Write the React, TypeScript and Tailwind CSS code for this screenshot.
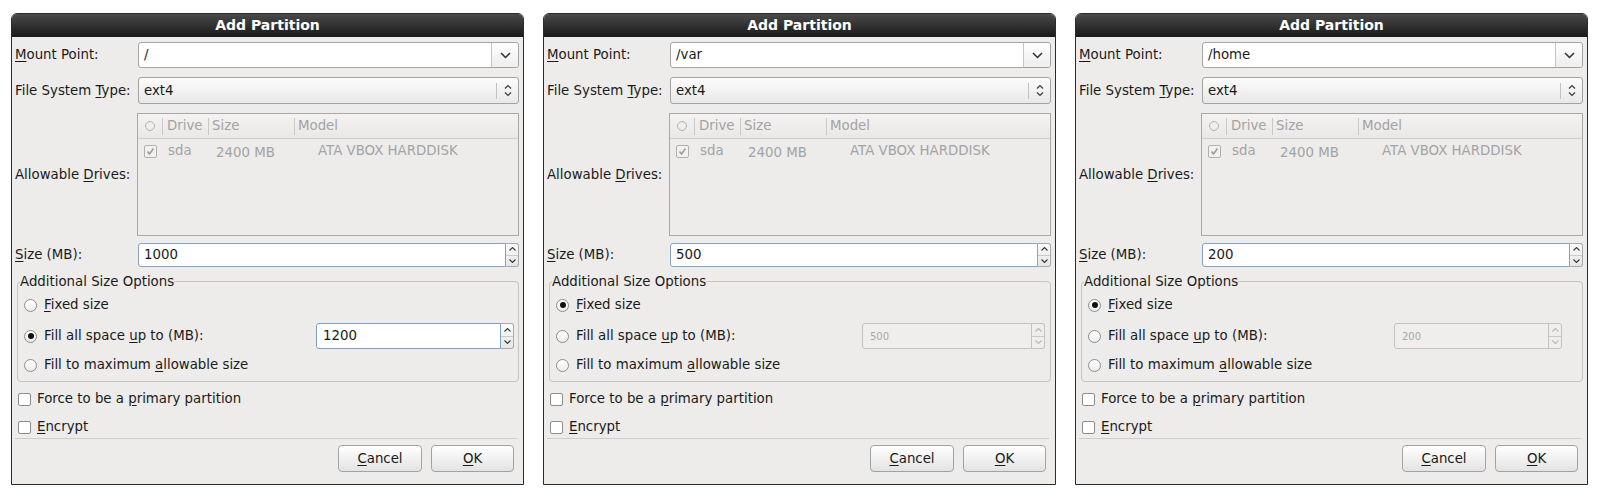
import React from 'react';

type DialogProps = {
	mount: string;
	size: string;
	fixed: boolean;
	spinValue: string;
	spinClass: string;
};

// small drawings used by the GTK widgets
function ChevronDown() {
	return (
		<svg width="11" height="7" viewBox="0 0 11 7">
			<polyline points="1,1 5.5,5.5 10,1" fill="none" stroke="#2e2e2e" strokeWidth="1.5" />
		</svg>
	);
}

function UpDown() {
	return (
		<svg width="8" height="13" viewBox="0 0 8 13">
			<polyline points="1,4.5 4,1.5 7,4.5" fill="none" stroke="#3a3a3a" strokeWidth="1.2" />
			<polyline points="1,8.5 4,11.5 7,8.5" fill="none" stroke="#3a3a3a" strokeWidth="1.2" />
		</svg>
	);
}

function SpinButtons({ disabled = false }: { disabled?: boolean }) {
	const c = disabled ? '#b9b9b9' : '#3a3a3a';
	return (
		<div
			className={`w-[13px] flex flex-col border border-l-0 rounded-r-[3px] ${
				disabled ? 'border-[#c4c2bf] bg-[#efeeed]' : 'border-[#a9a9a9] bg-gradient-to-b from-[#fbfbfb] to-[#e6e6e6]'
			}`}
		>
			<div className="flex-1 flex items-center justify-center border-b border-[#c9c9c9]">
				<svg width="7" height="4" viewBox="0 0 7 4">
					<polyline points="0.5,3.5 3.5,0.5 6.5,3.5" fill="none" stroke={c} strokeWidth="1.1" />
				</svg>
			</div>
			<div className="flex-1 flex items-center justify-center">
				<svg width="7" height="4" viewBox="0 0 7 4">
					<polyline points="0.5,0.5 3.5,3.5 6.5,0.5" fill="none" stroke={c} strokeWidth="1.1" />
				</svg>
			</div>
		</div>
	);
}

function Radio({ checked }: { checked: boolean }) {
	return (
		<div className="w-[13px] h-[13px] rounded-full border border-[#8d8d8d] bg-gradient-to-b from-white to-[#ececec] flex items-center justify-center shrink-0">
			{checked && <div className="w-[6px] h-[6px] rounded-full bg-[#111]" />}
		</div>
	);
}

function Check({ checked = false, disabled = false }: { checked?: boolean; disabled?: boolean }) {
	return (
		<div
			className={`w-[13px] h-[13px] rounded-[2px] border flex items-center justify-center shrink-0 ${
				disabled ? 'border-[#b0b0b0] bg-[#f2f1f0]' : 'border-[#8d8d8d] bg-white'
			}`}
		>
			{checked && (
				<svg width="9" height="9" viewBox="0 0 9 9">
					<polyline points="1.5,4.5 3.5,7 7.5,1.5" fill="none" stroke="#9a9a9a" strokeWidth="1.5" />
				</svg>
			)}
		</div>
	);
}

function Button({ children }: { children: React.ReactNode }) {
	return (
		<div className="h-[27px] flex items-center justify-center rounded-[4px] border border-[#a2a2a2] bg-gradient-to-b from-white to-[#e3e3e3] shadow-[inset_0_1px_0_#fff]">
			{children}
		</div>
	);
}

function AddPartitionDialog({ mount, size, fixed, spinValue, spinClass }: DialogProps) {
	return (
		<div className="w-[513px] border border-[#2b2b2b] rounded-t-[6px] bg-[#edeceb] flex flex-col text-[13.33px] text-[#1a1a1a]">
			{/* Title bar */}
			<div className="h-[23px] rounded-t-[5px] bg-gradient-to-b from-[#4a4a4a] to-[#1a1a1a] flex items-center justify-center text-white font-bold text-[14px]">
				Add Partition
			</div>

			<div className="pl-[3px] pr-[4px] pb-[12px] flex flex-col">
				{/* Mount point */}
				<div className="mt-[5px] flex items-center">
					<div className="w-[123px]">
						<u className="underline-offset-2">M</u>ount Point:
					</div>
					<div className="flex-1 h-[26px] flex rounded-[3px] border border-[#a3a3a3] bg-white">
						<div className="flex-1 flex items-center px-[5px]">{mount}</div>
						<div className="w-[27px] flex items-center justify-center border-l border-[#c6c6c6] rounded-r-[3px] bg-gradient-to-b from-white to-[#ededed]">
							<ChevronDown />
						</div>
					</div>
				</div>

				{/* File system type */}
				<div className="mt-[9px] flex items-center">
					<div className="w-[123px]">
						File System <u className="underline-offset-2">T</u>ype:
					</div>
					<div className="flex-1 h-[27px] flex items-center rounded-[3px] border border-[#a3a3a3] bg-gradient-to-b from-[#fcfcfc] to-[#e8e8e8]">
						<div className="flex-1 px-[5px]">ext4</div>
						<div className="h-[16px] border-l border-[#c2c2c2]" />
						<div className="w-[21px] flex items-center justify-center">
							<UpDown />
						</div>
					</div>
				</div>

				{/* Allowable drives */}
				<div className="mt-[9px] flex items-center">
					<div className="w-[122px]">
						Allowable <u className="underline-offset-2">D</u>rives:
					</div>
					<div className="flex-1 h-[123px] border border-[#aaa9a8] bg-[#edeceb] flex flex-col text-[#a3a3a3]">
						<div className="h-[25px] flex items-center border-b border-[#cfcdcb] bg-gradient-to-b from-[#f4f3f2] to-[#e9e8e7]">
							<div className="w-[24px] flex items-center justify-center">
								<div className="w-[10px] h-[10px] rounded-full border border-[#b3b3b3]" />
							</div>
							<div className="h-[17px] border-l border-[#c9c9c9]" />
							<div className="w-[45px] pl-[4px]">Drive</div>
							<div className="h-[17px] border-l border-[#c9c9c9]" />
							<div className="w-[85px] pl-[3px]">Size</div>
							<div className="h-[17px] border-l border-[#c9c9c9]" />
							<div className="pl-[3px]">Model</div>
						</div>
						<div className="h-[24px] flex items-center">
							<div className="w-[6px]" />
							<Check checked disabled />
							<div className="w-[59px] pl-[11px]">sda</div>
							<div className="w-[102px] pt-[3px]">2400 MB</div>
							<div>ATA VBOX HARDDISK</div>
						</div>
					</div>
				</div>

				{/* Size */}
				<div className="mt-[7px] flex items-center">
					<div className="w-[123px]">
						<u className="underline-offset-2">S</u>ize (MB):
					</div>
					<div className="flex-1 h-[24px] flex">
						<div className="flex-1 flex items-center px-[5px] bg-white border border-[#86a3c9] rounded-l-[3px]">{size}</div>
						<SpinButtons />
					</div>
				</div>

				{/* Additional size options */}
				<fieldset className="mt-[6px] ml-[2px] border border-[#c6c3c0] rounded-[4px] px-0 pt-0 pb-[3px] min-w-0">
					<legend className="ml-[2px] px-0 leading-[17px]">Additional Size Options</legend>
					<div className="pl-[6px] flex flex-col">
						<div className="mt-[2px] h-[26px] flex items-center gap-[7px]">
							<Radio checked={fixed} />
							<span>
								<u className="underline-offset-2">F</u>ixed size
							</span>
						</div>
						<div className="mt-[5px] h-[26px] flex items-center gap-[7px]">
							<Radio checked={!fixed} />
							<span className="flex-1">
								Fill all space <u className="underline-offset-2">u</u>p to (MB):
							</span>
							{fixed ? (
								<div className={`h-[26px] flex ${spinClass}`}>
									<div className="flex-1 flex items-center px-[7px] text-[10px] text-[#a9a9a9] bg-[#efeeed] border border-[#c4c2bf] rounded-l-[3px]">
										{spinValue}
									</div>
									<SpinButtons disabled />
								</div>
							) : (
								<div className={`h-[26px] flex ${spinClass}`}>
									<div className="flex-1 flex items-center px-[6px] bg-white border border-[#7f9fcb] rounded-l-[3px]">
										{spinValue}
									</div>
									<SpinButtons />
								</div>
							)}
						</div>
						<div className="mt-[3px] h-[26px] flex items-center gap-[7px]">
							<Radio checked={false} />
							<span>
								Fill to maximum <u className="underline-offset-2">a</u>llowable size
							</span>
						</div>
					</div>
				</fieldset>

				{/* Checkboxes */}
				<div className="mt-[7px] h-[20px] pl-[3px] flex items-center gap-[6px]">
					<Check />
					<span>
						Force to be a <u className="underline-offset-2">p</u>rimary partition
					</span>
				</div>
				<div className="mt-[8px] h-[20px] pl-[3px] flex items-center gap-[6px]">
					<Check />
					<span>
						<u className="underline-offset-2">E</u>ncrypt
					</span>
				</div>

				<div className="mt-[1px] mr-[2px] border-t border-[#cfccc9]" />

				{/* Buttons */}
				<div className="mt-[6px] mr-[5px] flex justify-end gap-[9px]">
					<div className="w-[84px]">
						<Button>
							<u className="underline-offset-2">C</u>ancel
						</Button>
					</div>
					<div className="w-[83px]">
						<Button>
							<u className="underline-offset-2">O</u>K
						</Button>
					</div>
				</div>
			</div>
		</div>
	);
}

export default function App() {
	return (
		<div className="w-[1600px] h-[498px] bg-white pl-[11px] pt-[13px] flex items-start gap-[19px] font-['DejaVu_Sans',sans-serif]">
			<AddPartitionDialog mount="/" size="1000" fixed={false} spinValue="1200" spinClass="w-[198px] mr-[4px]" />
			<AddPartitionDialog mount="/var" size="500" fixed spinValue="500" spinClass="w-[183px] mr-[5px]" />
			<AddPartitionDialog mount="/home" size="200" fixed spinValue="200" spinClass="w-[168px] mr-[20px]" />
		</div>
	);
}
